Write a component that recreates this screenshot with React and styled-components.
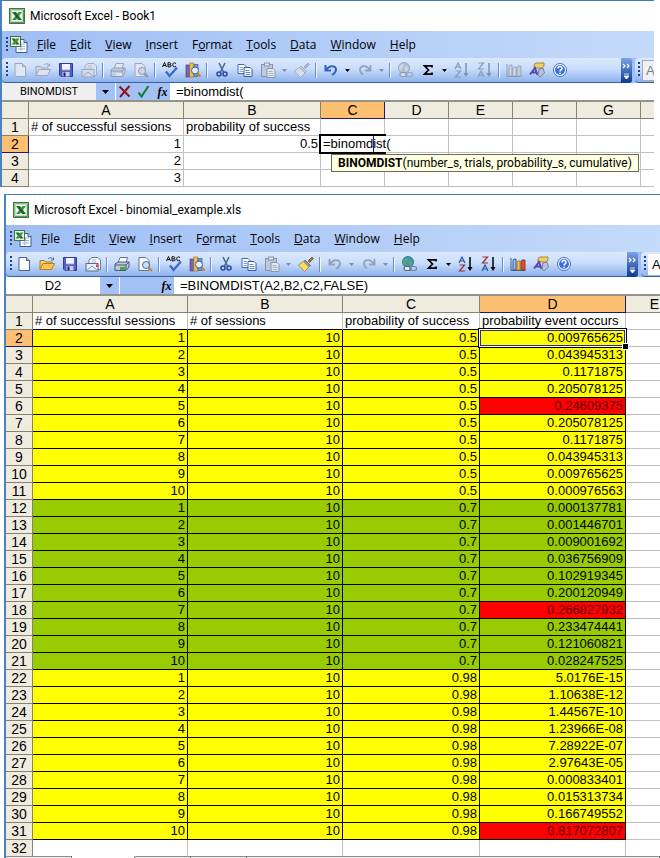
import React, { useState } from 'react';
import styled, { createGlobalStyle, css } from 'styled-components';

const GlobalStyle = createGlobalStyle`
  * {
    box-sizing: border-box;
  }

  body {
    margin: 0;
    background: #fff;
    color: #000;
    font-family: 'Liberation Sans', Arial, sans-serif;
    overflow: hidden;
  }

  button,
  input,
  select {
    margin: 0;
    padding: 0;
    border: 0;
    border-radius: 0;
    background: none;
    color: inherit;
    font: inherit;
  }
`;

const Desktop = styled.main`
  display: flex;
  flex-direction: column;
  gap: 7px;
`;

const Window = styled.section`
  margin-left: ${({ $left }) => $left}px;
  margin-right: ${({ $right }) => $right}px;
  border-top: 1px solid #3f7cb5;
  border-left: 2px solid #4a82bd;
  background: #fff;
  overflow: hidden;
`;

const TitleBar = styled.header`
  display: flex;
  align-items: center;
  gap: 5px;
  height: 30px;
  padding-left: 7px;
`;

const Title = styled.h1`
  margin: 0;
  font: 400 12px/16px Roboto, sans-serif;
  white-space: nowrap;
`;

const MenuBar = styled.nav`
  display: flex;
  align-items: center;
  height: 27px;
  padding-left: 4px;
  background: linear-gradient(90deg, #9ebef5, #c4dafa);
`;

const Grip = styled.span`
  flex: none;
  width: 2px;
  height: 16px;
  background: repeating-linear-gradient(#27418c 0 2px, transparent 2px 4px);
`;

const MenuIcon = styled.span`
  display: flex;
  margin: 0 4px 0 2px;
`;

const MenuButton = styled.button`
  padding: 0 5px;
  margin-right: 4px;
  font: 400 12px/16px 'Open Sans', sans-serif;
`;

const ToolStrip = styled.div`
  display: flex;
  height: 25px;
  background: #9ebef5;
`;

const ToolBar = styled.div`
  display: flex;
  align-items: center;
  flex: 1;
  padding-left: 4px;
  border-bottom: 1px solid #3b619c;
  border-radius: 4px 0 0 4px;
  background: linear-gradient(#dce9fd, #c9ddfb 45%, #8db2ec);
`;

const ToolButton = styled.button`
  display: flex;
  flex: none;
  align-items: center;
  justify-content: center;
  width: 23px;
  height: 22px;
`;

const CaretButton = styled(ToolButton)`
  width: 11px;
`;

const Divider = styled.span`
  flex: none;
  width: 6px;
  height: 15px;
  border-left: 2px solid transparent;
  background: linear-gradient(90deg, #6a8ccb 1px, #f2f7ff 1px 2px, transparent 2px);
  background-clip: padding-box;
`;

const Overflow = styled.button`
  display: flex;
  align-items: center;
  justify-content: center;
  width: 11px;
  height: 25px;
  border-radius: 0 3px 3px 0;
  background: linear-gradient(#7ba2e7, #0a3a92);
`;

const FontBar = styled(ToolBar)`
  flex: none;
  gap: 2px;
  width: 19px;
  margin-left: 3px;
  padding-left: 3px;
  overflow: hidden;
`;

const FontBox = styled.input`
  flex: none;
  width: 100px;
  height: 21px;
  padding-left: 3px;
  border: 1px solid ${({ disabled }) => (disabled ? '#a5acb8' : '#fff')};
  background: ${({ disabled }) => (disabled ? '#eef2f8' : '#fff')};
  color: ${({ disabled }) => (disabled ? '#808080' : '#000')};
  font-size: 13px;
`;

const FormulaBar = styled.div`
  display: flex;
  height: 17px;
`;

const NameBox = styled.input`
  width: 94px;
  background: ${({ $editing }) => ($editing ? '#efefef' : '#fff')};
  font: ${({ $editing }) => ($editing ? '400 11px/17px Roboto, sans-serif' : '13px/17px "Liberation Sans", sans-serif')};
  text-align: center;
`;

const NameDrop = styled.button`
  display: flex;
  align-items: center;
  justify-content: center;
  width: 19px;
  background: #a4c1f5;
`;

const FormulaActions = styled.div`
  display: flex;
  align-items: center;
  justify-content: flex-end;
  gap: 4px;
  width: 54px;
  margin-left: 1px;
  background: #a4c1f5;
`;

const FormulaButton = styled.button`
  display: flex;
  align-items: center;
  justify-content: center;
  width: 15px;
  height: 17px;
`;

const FormulaInput = styled.input`
  flex: 1;
  min-width: 0;
  padding-left: 6px;
  font-size: 13px;
  line-height: 17px;
`;

const Sheet = styled.table`
  width: 0;
  table-layout: fixed;
  border-top: 2px solid #96938a;
  border-spacing: 0;
  font-size: 13px;
  line-height: 16px;
`;

const headActive = css`
  border-color: #1a1a6e;
  background: #fdc072;
`;

const HeadCell = styled.th`
  height: 17px;
  padding: 0;
  border-right: 1px solid #85826f;
  border-bottom: 1px solid #85826f;
  background: #efecdf;
  font-weight: 400;
  font-size: 14px;
  ${({ $active }) => $active && headActive}
`;

const fills = {
  yellow: '#ffff00',
  green: '#99cc00',
  red: '#ff0000',
};

const Cell = styled.td`
  position: relative;
  height: 17px;
  padding: 0 2px;
  border-right: 1px solid ${({ $fill }) => ($fill ? '#000' : '#c0c0c0')};
  border-bottom: 1px solid ${({ $fill, $above }) => ($fill || $above ? '#000' : '#c0c0c0')};
  background: ${({ $fill }) => fills[$fill] || '#fff'};
  color: ${({ $fill }) => ($fill === 'red' ? '#5c0000' : '#000')};
  text-align: ${({ $text }) => ($text ? 'left' : 'right')};
  white-space: nowrap;
`;

const LastCell = styled(Cell)`
  height: 16px;
  border-bottom: 0;
`;

const LastHeadCell = styled(HeadCell)`
  height: 16px;
  border-bottom: 0;
`;

const Selection = styled.span`
  position: absolute;
  z-index: 1;
  inset: -2px -2px -2px -2px;
  border: 1px solid #000;
  box-shadow: inset 0 0 0 1px #fff, inset 0 0 0 2px #2a2a9a;

  &::after {
    content: '';
    position: absolute;
    right: -3px;
    bottom: -3px;
    width: 5px;
    height: 5px;
    border: 1px solid #fff;
    background: #000;
  }
`;

const EditFrame = styled.span`
  position: absolute;
  z-index: 1;
  inset: -2px -2px -2px -2px;
  border: 2px solid #000;
  border-right: 0;

  &::after {
    content: '';
    position: absolute;
    right: 0;
    bottom: -3px;
    width: 4px;
    height: 4px;
    background: #000;
  }
`;

const CellEditor = styled.input`
  position: absolute;
  z-index: 2;
  top: 0;
  left: 0;
  width: 71px;
  height: 16px;
  padding-left: 2px;
  background: #fff;
`;

const EditorCaret = styled.span`
  position: absolute;
  z-index: 3;
  top: 0;
  left: 52px;
  width: 1px;
  height: 16px;
  background: #10307a;
`;

const FunctionTip = styled.div`
  position: absolute;
  z-index: 4;
  top: 18px;
  left: 10px;
  padding: 0 6px;
  border: 1px solid #6b6b5c;
  background: #ffffe1;
  font: 400 12px/16px Roboto, sans-serif;
  text-align: left;
`;

const SheetTabs = styled.div`
  display: flex;
  height: 3px;
`;

const SheetTab = styled.span`
  flex: ${({ $width }) => ($width ? `0 0 ${$width}px` : 1)};
  border-top: 1px solid ${({ $active }) => ($active ? '#fff' : '#8c8c8c')};
  border-right: 1px solid #6e6e6e;
  background: ${({ $active }) => ($active ? '#fff' : '#efefef')};
`;

const ExcelIcon = () => (
  <svg width="16" height="16" viewBox="0 0 16 16" aria-hidden="true">
    <rect x="0.5" y="0.5" width="15" height="15" fill="#c3dcbd" stroke="#3f7543" />
    <path d="M1.500 14.500v-13h13" fill="none" stroke="#8dbb86" />
    <path d="M14.500 2v12.500H2" fill="none" stroke="#5c9159" />
    <rect x="3" y="3" width="10" height="10" fill="#f7fbf5" />
    <path d="M3 4h4l6 8H9z" fill="#1f6b2b" />
    <path d="M13 4H9.500L3 12h4z" fill="#3f8f45" />
    <path d="M8 6.500l1.500 1.800L8 10 6.500 8.300z" fill="#16501f" />
  </svg>
);

const WorkbookIcon = () => (
  <svg width="18" height="17" viewBox="0 0 18 17" aria-hidden="true">
    <path d="M6 3.500h8l3 3v10H6z" fill="#fff" stroke="#3d5a92" />
    <path d="M14 3.500v3h3" fill="#b8cdf0" stroke="#3d5a92" />
    <path d="M8 8h7M8 10.500h7M8 13h7M11 7v8" stroke="#9aaed2" />
    <rect x="0.500" y="0.500" width="10" height="10" fill="#e8f2e4" stroke="#3f7543" />
    <path d="M1.500 2.500h3.500l4.500 6H6z" fill="#1f6b2b" />
    <path d="M9.500 2.500H6.500l-5 6h3.500z" fill="#3f8f45" />
  </svg>
);

const Caret = ({ off }) => (
  <svg width="5" height="3" viewBox="0 0 5 3" aria-hidden="true">
    <path d="M0 0h5L2.500 3z" fill={off ? '#7f8da8' : '#000'} />
  </svg>
);

// off = greyed out palette, used while a cell is being edited
const drawings = {
  new: (off) => (
    <>
      <path d="M3 1.500h7.500l3 3v10H3z" fill={off ? '#dfe6f2' : '#fff'} stroke={off ? '#9aa7c0' : '#4d6185'} />
      <path d="M10.500 1.500v3h3" fill={off ? '#c3cde0' : '#b9cbea'} stroke={off ? '#9aa7c0' : '#4d6185'} />
    </>
  ),
  open: (off) => (
    <>
      <path d="M1 13.500V4.500h4.500l1.500 1.500h6v3" fill={off ? '#cfd7e5' : '#f3cf6d'} stroke={off ? '#9ca8be' : '#a9782a'} />
      <path d="M1 13.500l3-6h11.500l-3 6z" fill={off ? '#dde3ee' : '#fbc34f'} stroke={off ? '#9ca8be' : '#b67f22'} />
      <path d="M9 3c2-2 4-1.500 5 .5M14.500 1.500v2.500H12" fill="none" stroke={off ? '#97a4bb' : '#3f67a8'} />
    </>
  ),
  save: () => (
    <>
      <path d="M1.500 1.500h13v13H3l-1.500-1.500z" fill="#5360c4" stroke="#353c98" />
      <rect x="4" y="2" width="8" height="6" fill="#f1f4fd" />
      <path d="M4 8h8" stroke="#9aa4de" />
      <rect x="4.500" y="10" width="7" height="4.500" fill="#c8cdec" />
      <rect x="5.500" y="10.500" width="2" height="4" fill="#1c2266" />
    </>
  ),
  mail: (off) => (
    <>
      <path d="M4 7.500V4l3-2.500h6L15.500 4v9.500h-3" fill={off ? '#dbe2ee' : '#fff'} stroke={off ? '#a1adc2' : '#66789c'} />
      <path d="M7 4h4M6.500 6h5" stroke={off ? '#b3bdcf' : '#9dadc9'} />
      <rect x="1" y="7.500" width="12" height="7.500" fill={off ? '#d3dbe9' : '#e9eef8'} stroke={off ? '#9ba8bf' : '#5b6f95'} />
      <path d="M1 15l6-5 6 5" fill="none" stroke={off ? '#9ba8bf' : '#8a9aba'} />
      {!off && <rect x="11" y="8.500" width="2.500" height="2.500" fill="#d2492f" />}
    </>
  ),
  print: (off) => (
    <>
      <path d="M4 7l2-5.500h7.500L12 7z" fill={off ? '#e2e8f2' : '#fff'} stroke={off ? '#98a5bd' : '#61759b'} />
      <path d="M1 8l3-2h11v5l-3 3.500H1z" fill={off ? '#c3cddf' : '#c0c9d8'} stroke={off ? '#8d9ab3' : '#4a5b7c'} />
      <path d="M1 9h11l3-3M12 9v5" fill="none" stroke={off ? '#8d9ab3' : '#4a5b7c'} />
      <rect x="6" y="11" width="6" height="3" fill={off ? '#dbe2ec' : '#3fae49'} />
    </>
  ),
  preview: (off) => (
    <>
      <path d="M2 1.500h7l3 3v10H2z" fill={off ? '#dfe5f0' : '#fff'} stroke={off ? '#9ba8bf' : '#5f7399'} />
      <circle cx="9" cy="9" r="3.500" fill={off ? '#ccd6e7' : '#c9e3fa'} stroke={off ? '#8a97b0' : '#4a628e'} />
      <path d="M11.500 11.500L15 15" stroke={off ? '#8a97b0' : '#c9812b'} strokeWidth="2" />
    </>
  ),
  spell: () => (
    <>
      <path d="M.5 5L2.500.5 4.500 5M1.200 3.500h2.600M6 .7V5M6 .7h1.500q1.300 0 1.300 1T7.500 2.800H6M7.700 2.800q1.500 0 1.500 1T7.700 4.900H6M14 1.500Q11-.3 10.800 2.800T14 4.200" fill="none" stroke="#111" strokeWidth="1" />
      <path d="M4 9.500l3.500 4.500L15 5.500" fill="none" stroke="#3e68c9" strokeWidth="2.300" />
    </>
  ),
  research: () => (
    <>
      <rect x="1" y="3" width="3.500" height="12" fill="#7b62b5" stroke="#48377c" strokeWidth=".6" />
      <rect x="4.800" y="1" width="4" height="14" fill="#efc14c" stroke="#97701c" strokeWidth=".6" />
      <rect x="9" y="2.500" width="4" height="12" fill="#6f9bd8" stroke="#2c5597" strokeWidth=".6" />
      <circle cx="10" cy="8.500" r="3.500" fill="#dfeefd" stroke="#48628f" />
      <path d="M12.500 11l3 3.500" stroke="#c9812b" strokeWidth="2" />
    </>
  ),
  cut: () => (
    <>
      <path d="M5 1l4.500 9M11 1L6.500 10" fill="none" stroke="#4f678f" strokeWidth="1.600" />
      <circle cx="5" cy="12" r="2" fill="none" stroke="#2849a0" strokeWidth="1.500" />
      <circle cx="11" cy="12" r="2" fill="none" stroke="#2849a0" strokeWidth="1.500" />
    </>
  ),
  copy: () => (
    <>
      <path d="M1 2.500h6l2 2v7H1z" fill="#fff" stroke="#4669ad" />
      <path d="M2.500 5.500H6M2.500 7.500H6M2.500 9.500H6" stroke="#7da0dd" />
      <path d="M7 5.500h6l2 2v7H7z" fill="#fff" stroke="#3458a0" />
      <path d="M8.500 8.500h4M8.500 10.500h5M8.500 12.500h5" stroke="#5f89d4" />
    </>
  ),
  paste: () => (
    <>
      <rect x="1.500" y="2.500" width="11" height="12" fill="#bec9dc" stroke="#8794ae" />
      <rect x="4.500" y="1" width="5" height="3" fill="#dde4ef" stroke="#8794ae" />
      <path d="M7 6.500h6l2 2v7H7z" fill="#e4eaf4" stroke="#8794ae" />
      <path d="M8.500 9.500h4M8.500 11.500h5M8.500 13.500h5" stroke="#a3afc6" />
    </>
  ),
  brush: (off) => (
    <>
      <path d="M10 5l4-4 1.500 1.500-4 4z" fill={off ? '#aab5c9' : '#a7732f'} stroke={off ? '#8f9cb4' : '#664315'} strokeWidth=".7" />
      <path d="M7 4l5.500 5.500-2 1.500L5.500 6z" fill={off ? '#c2ccdd' : '#8e98ae'} stroke={off ? '#929eb6' : '#4b5570'} strokeWidth=".7" />
      <path d="M5.500 5.500l5.500 5.500-4.500 4.500L.5 9z" fill={off ? '#d7deea' : '#f6dc63'} stroke={off ? '#97a4bb' : '#a48320'} strokeWidth=".8" />
    </>
  ),
  undo: (off) => (
    <path d="M2.500 3v5.500H8M3 8c3-5 10-5 10-.5 0 3-2 4-4 5.500" fill="none" stroke={off ? '#93a1bf' : '#3460c4'} strokeWidth="2" />
  ),
  redo: () => (
    <path d="M13.500 3v5.500H8M13 8C10 3 3 3 3 7.500c0 3 1.500 4 3 5" fill="none" stroke="#93a1bf" strokeWidth="1.800" />
  ),
  link: (off) => (
    <>
      <circle cx="7" cy="6" r="5.500" fill={off ? '#b4bfd2' : '#3f93c9'} stroke={off ? '#8d9ab2' : '#235f93'} strokeWidth=".8" />
      <path d="M3.500 3c2-2 4-1 3 1S4.500 7 3.500 9C1.500 7 1.500 5 3.500 3zM8.500 4.500c2-1 3 .5 3 2.500l-2 3C7.500 9 7.500 6.500 8.500 4.500z" fill={off ? '#ccd5e3' : '#58b04a'} />
      <rect x="3" y="10.500" width="7" height="4" rx="2" fill={off ? '#d3dcea' : '#dfe6f2'} stroke={off ? '#8d9ab2' : '#59657c'} strokeWidth="1.200" />
      <rect x="8.500" y="10.500" width="7" height="4" rx="2" fill="none" stroke={off ? '#9aa6bc' : '#79859c'} strokeWidth="1.200" />
    </>
  ),
  sum: () => (
    <path d="M12 5.500V3.800H4.500l4 4.200-4 4.200H12v-1.700" fill="none" stroke="#000" strokeWidth="1.700" />
  ),
  sortAsc: (off) => (
    <>
      <path d="M1 7L4 1l3 6M2 5h4" fill="none" stroke={off ? '#8c9ab4' : '#2c55a8'} strokeWidth="1.200" />
      <path d="M1.500 9h5L1.500 15h5.500" fill="none" stroke={off ? '#8c9ab4' : '#a02c3c'} strokeWidth="1.200" />
      <path d="M12 1v12" stroke={off ? '#8290ab' : '#000'} strokeWidth="1.500" />
      <path d="M9.500 11h5L12 15z" fill={off ? '#8290ab' : '#000'} />
    </>
  ),
  sortDesc: (off) => (
    <>
      <path d="M1.500 1h5L1.500 7h5.500" fill="none" stroke={off ? '#8c9ab4' : '#a02c3c'} strokeWidth="1.200" />
      <path d="M1 15l3-6 3 6M2 13h4" fill="none" stroke={off ? '#8c9ab4' : '#2c55a8'} strokeWidth="1.200" />
      <path d="M12 1v12" stroke={off ? '#8290ab' : '#000'} strokeWidth="1.500" />
      <path d="M9.500 11h5L12 15z" fill={off ? '#8290ab' : '#000'} />
    </>
  ),
  chart: (off) => (
    <>
      <path d="M1 2v12.500h14.500" fill="none" stroke={off ? '#8d9ab2' : '#4b5d80'} />
      <path d="M3 4l1-1h2v11H3z" fill={off ? '#cbd4e2' : '#9db8ea'} stroke={off ? '#8d9ab2' : '#223f88'} strokeWidth=".8" />
      <path d="M7 6l1-1h2v9H7z" fill={off ? '#d9e0eb' : '#f3c13d'} stroke={off ? '#8d9ab2' : '#95701a'} strokeWidth=".8" />
      <path d="M11 5l1-1h3v10H11z" fill={off ? '#c3cddd' : '#d65432'} stroke={off ? '#8d9ab2' : '#842b16'} strokeWidth=".8" />
    </>
  ),
  drawing: () => (
    <>
      <path d="M5 2.500L7 1h8v3l-2 2H5z" fill="#edd06c" stroke="#9a741f" strokeWidth=".8" />
      <path d="M1 12.500L6 6l2.500 7M3 10.500h5" fill="none" stroke="#5846b4" strokeWidth="2" />
      <path d="M10 7l4-1 1.500 5-4.500 4-2-2z" fill="#b7c3db" stroke="#5f7094" strokeWidth=".8" />
    </>
  ),
  help: () => (
    <>
      <circle cx="8" cy="8" r="6.500" fill="#fff" stroke="#3c6ed2" />
      <circle cx="8" cy="8" r="5" fill="#3b73dc" />
      <path d="M6 6.500C6 4 10 4 10 6.300 10 8 8 7.800 8 9.500M8 10.700v1.300" fill="none" stroke="#fff" strokeWidth="1.500" />
    </>
  ),
};

const ToolIcon = ({ name, off }) => (
  <svg width="16" height="16" viewBox="0 0 16 16" aria-hidden="true">
    {drawings[name](off)}
  </svg>
);

const CancelIcon = () => (
  <svg width="13" height="13" viewBox="0 0 13 13" aria-hidden="true">
    <path d="M1.500 1.500l10 10M11.500 1L2 12" stroke="#8e1218" strokeWidth="2" fill="none" />
  </svg>
);

const EnterIcon = () => (
  <svg width="13" height="13" viewBox="0 0 13 13" aria-hidden="true">
    <path d="M1.500 7.500l3 4L11.500 1" stroke="#147a2b" strokeWidth="2" fill="none" />
  </svg>
);

const FunctionLabel = styled.span`
  font: italic 700 12px/16px 'Liberation Serif', serif;
`;

const OverflowIcon = () => (
  <svg width="9" height="20" viewBox="0 0 9 20" aria-hidden="true">
    <path d="M1 3l2 2-2 2M5 3l2 2-2 2" fill="none" stroke="#fff" strokeWidth="1.200" />
    <path d="M2 13h5M2 15h5L4.500 18z" fill="#fff" stroke="#fff" strokeWidth=".8" />
  </svg>
);

// '|' is a divider, 'v' the drop-down arrow of the button before it
const tools = [
  'new', 'open', 'save', 'mail', '|', 'print', 'preview', '|', 'spell', 'research', '|',
  'cut', 'copy', 'paste', 'v', 'brush', '|', 'undo', 'v', 'redo', 'v', '|',
  'link', 'sum', 'v', 'sortAsc', 'sortDesc', '|', 'chart', 'drawing', 'help',
];

const menus = [
  ['', 'F', 'ile'],
  ['', 'E', 'dit'],
  ['', 'V', 'iew'],
  ['', 'I', 'nsert'],
  ['F', 'o', 'rmat'],
  ['', 'T', 'ools'],
  ['', 'D', 'ata'],
  ['', 'W', 'indow'],
  ['', 'H', 'elp'],
];

const ExcelWindow = ({ title, left, right, editing, name, formula, disabledTools, children }) => {
  const [value, setValue] = useState(formula);

  return (
    <Window $left={left} $right={right}>
      <TitleBar>
        <ExcelIcon />
        <Title>{title}</Title>
      </TitleBar>
      <MenuBar>
        <Grip />
        <MenuIcon><WorkbookIcon /></MenuIcon>
        {menus.map(([before, key, after]) => (
          <MenuButton key={key + after}>
            {before}<u>{key}</u>{after}
          </MenuButton>
        ))}
      </MenuBar>
      <ToolStrip>
        <ToolBar>
          <Grip />
          {tools.map((tool, index) => {
            if (tool === '|') return <Divider key={index} />;
            const owner = tool === 'v' ? tools[index - 1] : tool;
            const off = disabledTools.includes(owner);
            if (tool === 'v') {
              return (
                <CaretButton key={index} disabled={off} aria-label={`${owner} options`}>
                  <Caret off={off} />
                </CaretButton>
              );
            }
            return (
              <ToolButton key={index} disabled={off} aria-label={tool}>
                <ToolIcon name={tool} off={off} />
              </ToolButton>
            );
          })}
        </ToolBar>
        <Overflow aria-label="Toolbar options"><OverflowIcon /></Overflow>
        <FontBar>
          <Grip />
          <FontBox aria-label="Font" defaultValue="Arial" disabled={editing} />
        </FontBar>
      </ToolStrip>
      <FormulaBar>
        <NameBox aria-label="Name box" defaultValue={name} $editing={editing} />
        <NameDrop aria-label="Show names">
          <svg width="7" height="4" viewBox="0 0 7 4" aria-hidden="true"><path d="M0 0h7L3.500 4z" /></svg>
        </NameDrop>
        <FormulaActions>
          {editing && <FormulaButton aria-label="Cancel"><CancelIcon /></FormulaButton>}
          {editing && <FormulaButton aria-label="Enter"><EnterIcon /></FormulaButton>}
          <FormulaButton aria-label="Insert function"><FunctionLabel>fx</FunctionLabel></FormulaButton>
        </FormulaActions>
        <FormulaInput aria-label="Formula" value={value} onChange={(e) => setValue(e.target.value)} />
      </FormulaBar>
      {children}
    </Window>
  );
};

const SheetHead = ({ columns, widths, active }) => (
  <>
    <colgroup>
      {widths.map((width, index) => <col key={index} width={width} />)}
    </colgroup>
    <thead>
      <tr>
        <HeadCell />
        {columns.map((column) => (
          <HeadCell key={column} scope="col" $active={column === active}>{column}</HeadCell>
        ))}
      </tr>
    </thead>
  </>
);

const bookColumns = ['A', 'B', 'C', 'D', 'E', 'F', 'G', ''];
const bookRows = [
  ['# of successful sessions', 'probability of success'],
  ['1', '0.5'],
  ['2', ''],
  ['3', ''],
];

const BookSheet = () => (
  <Sheet>
    <SheetHead columns={bookColumns} widths={[27, 155, 137, 64, 64, 64, 64, 64, 64]} active="C" />
    <tbody>
      {bookRows.map((row, index) => (
        <tr key={index}>
          <HeadCell scope="row" $active={index === 1}>{index + 1}</HeadCell>
          {bookColumns.map((column, col) => (
            <Cell key={column} $text={index === 0}>
              {row[col]}
              {index === 1 && column === 'C' && (
                <>
                  <EditFrame />
                  <CellEditor aria-label="Cell C2" defaultValue="=binomdist(" />
                  <EditorCaret />
                  <FunctionTip role="tooltip">
                    <b>BINOMDIST</b>(number_s, trials, probability_s, cumulative)
                  </FunctionTip>
                </>
              )}
            </Cell>
          ))}
        </tr>
      ))}
    </tbody>
  </Sheet>
);

const groups = [
  {
    probability: '0.5',
    fill: 'yellow',
    peak: 4,
    results: [
      '0.009765625', '0.043945313', '0.1171875', '0.205078125', '0.24609375',
      '0.205078125', '0.1171875', '0.043945313', '0.009765625', '0.000976563',
    ],
  },
  {
    probability: '0.7',
    fill: 'green',
    peak: 6,
    results: [
      '0.000137781', '0.001446701', '0.009001692', '0.036756909', '0.102919345',
      '0.200120949', '0.266827932', '0.233474441', '0.121060821', '0.028247525',
    ],
  },
  {
    probability: '0.98',
    fill: 'yellow',
    peak: 9,
    results: [
      '5.0176E-15', '1.10638E-12', '1.44567E-10', '1.23966E-08', '7.28922E-07',
      '2.97643E-05', '0.000833401', '0.015313734', '0.166749552', '0.817072807',
    ],
  },
];

const binomialColumns = ['A', 'B', 'C', 'D', 'E'];
const binomialHeads = ['# of successful sessions', '# of sessions', 'probability of success', 'probability event occurs'];

const BinomialSheet = () => (
  <Sheet>
    <SheetHead columns={binomialColumns} widths={[27, 155, 155, 137, 146, 58]} active="D" />
    <tbody>
      <tr>
        <HeadCell scope="row">1</HeadCell>
        {binomialHeads.map((head) => <Cell key={head} $text $above>{head}</Cell>)}
        <Cell />
      </tr>
      {groups.map((group, groupIndex) =>
        group.results.map((result, index) => {
          const row = groupIndex * 10 + index + 2;
          return (
            <tr key={row}>
              <HeadCell scope="row" $active={row === 2}>{row}</HeadCell>
              <Cell $fill={group.fill}>{index + 1}</Cell>
              <Cell $fill={group.fill}>10</Cell>
              <Cell $fill={group.fill}>{group.probability}</Cell>
              <Cell $fill={index === group.peak ? 'red' : group.fill}>
                {result}
                {row === 2 && <Selection />}
              </Cell>
              <Cell />
            </tr>
          );
        })
      )}
      <tr>
        <LastHeadCell scope="row">32</LastHeadCell>
        {binomialColumns.map((column) => <LastCell key={column} />)}
      </tr>
    </tbody>
  </Sheet>
);

const App = () => (
  <>
    <GlobalStyle />
    <Desktop>
      <ExcelWindow
        title="Microsoft Excel - Book1"
        left={0}
        right={6}
        editing
        name="BINOMDIST"
        formula="=binomdist("
        disabledTools={['new', 'open', 'mail', 'print', 'preview', 'paste', 'brush', 'redo', 'link', 'sortAsc', 'sortDesc', 'chart']}
      >
        <BookSheet />
      </ExcelWindow>
      <ExcelWindow
        title="Microsoft Excel - binomial_example.xls"
        left={4}
        right={0}
        name="D2"
        formula="=BINOMDIST(A2,B2,C2,FALSE)"
        disabledTools={['paste', 'undo', 'redo']}
      >
        <BinomialSheet />
        <SheetTabs>
          <SheetTab $width={66} />
          <SheetTab $width={63} $active />
          <SheetTab $width={56} />
          <SheetTab $width={56} />
          <SheetTab />
        </SheetTabs>
      </ExcelWindow>
    </Desktop>
  </>
);

export default App;
